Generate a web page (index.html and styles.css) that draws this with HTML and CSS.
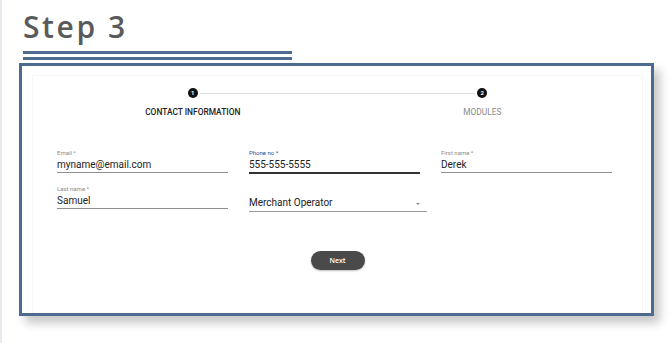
FILE: index.html
```html
<!DOCTYPE html>
<html>
  <head>
    <title>Step 3</title>
    <link rel="stylesheet" href="styles.css">
  </head>
  <body>
  <div class="page">
    <div class="head">
      <h1>Step 3</h1>
      <div class="rule"></div>
      <div class="rule"></div>
    </div>

    <div class="frame">
      <div class="card">
        <div class="steps">
          <div class="step first">
            <span class="dot">1</span>
            <span class="label">Contact Information</span>
          </div>
          <div class="step">
            <span class="dot">2</span>
            <span class="label muted">Modules</span>
          </div>
        </div>

        <form class="fields">
          <div class="field">
            <label>Email *</label>
            <div class="value">myname@email.com</div>
          </div>
          <div class="field focused">
            <label>Phone no *</label>
            <div class="value">555-555-5555</div>
          </div>
          <div class="field">
            <label>First name *</label>
            <div class="value">Derek</div>
          </div>
          <div class="field">
            <label>Last name *</label>
            <div class="value">Samuel</div>
          </div>
          <div class="select">
            <div class="value">Merchant Operator</div>
            <span class="arrow"></span>
          </div>
        </form>

        <div class="actions">
          <button type="button">Next</button>
        </div>
      </div>
    </div>
  </div>
  </body>
</html>
```

FILE: styles.css
```css
body {
  margin: 0;
  background: #fff;
  font-family: Roboto, "Liberation Sans", sans-serif;
}

.page {
  min-height: 100vh;
  border-left: 2px solid #e9e9ef;
  box-sizing: border-box;
}

.head {
  margin-left: 21px;
  width: 269px;
  padding-top: 12px;
}

h1 {
  margin: 0 0 9px;
  font-family: "Open Sans", sans-serif;
  font-weight: 600;
  font-size: 30px;
  line-height: 30px;
  letter-spacing: 2.6px;
  color: #5a5a5a;
}

.rule {
  height: 3px;
  background: #4d6a8f;
  margin-bottom: 3px;
}

.frame {
  margin: 3px 0 0 17px;
  width: 635px;
  height: 253px;
  box-sizing: border-box;
  border: 3px solid #4d6a8f;
  padding: 9px 8px 0 10px;
  box-shadow: 6px 7px 9px rgba(0, 0, 0, 0.22);
  background: #fff;
}

.card {
  height: 100%;
  box-sizing: border-box;
  border: 1px solid #f5f5f5;
  border-bottom: none;
  padding: 12px 15px 0;
}

/* stepper */
.steps {
  display: grid;
  grid-template-columns: 1fr 1fr;
}

.step {
  display: flex;
  flex-direction: column;
  align-items: center;
  position: relative;
}

.step.first::after {
  content: "";
  position: absolute;
  top: 5px;
  left: calc(50% + 7px);
  width: calc(100% - 14px);
  height: 1px;
  background: #dcdcdc;
}

.dot {
  width: 10px;
  height: 10px;
  border-radius: 50%;
  background: #111;
  color: #fff;
  font-size: 6px;
  font-weight: 700;
  line-height: 10px;
  text-align: center;
}

.label {
  margin-top: 9px;
  font-size: 8.4px;
  line-height: 10px;
  font-weight: 500;
  text-transform: uppercase;
  color: #222;
}

.label.muted {
  font-weight: 400;
  color: #8a8a8a;
}

/* form */
.fields {
  display: grid;
  grid-template-columns: 171px 171px 171px;
  column-gap: 21px;
  row-gap: 11px;
  align-items: start;
  margin: 32px 0 0 9px;
}

.field label {
  display: block;
  font-size: 6px;
  line-height: 8px;
  color: #8c8c8c;
  margin-bottom: 2px;
}

.field .value {
  font-size: 10px;
  line-height: 12px;
  color: #222;
  padding-bottom: 1px;
  border-bottom: 1px solid #8f8f8f;
}

.field.focused label {
  color: #3b4683;
}

.field.focused .value {
  border-bottom: 2px solid #333;
}

.select {
  width: 178px;
  padding-top: 12px;
  position: relative;
}

.select .value {
  font-size: 10px;
  line-height: 12px;
  color: #222;
  padding-bottom: 2px;
  border-bottom: 1px solid #9a9a9a;
}

.arrow {
  position: absolute;
  right: 7px;
  top: 18px;
  border-left: 2.5px solid transparent;
  border-right: 2.5px solid transparent;
  border-top: 2.5px solid #888;
}

.actions {
  display: flex;
  justify-content: center;
  margin-top: 39px;
}

.actions button {
  width: 54px;
  height: 19px;
  border: none;
  border-radius: 10px;
  background: #4a4a4a;
  color: #fff;
  font-family: "Open Sans", sans-serif;
  font-size: 7px;
  font-weight: 600;
  padding: 0;
  box-shadow: 0 1px 2px rgba(0, 0, 0, 0.25);
}
```
